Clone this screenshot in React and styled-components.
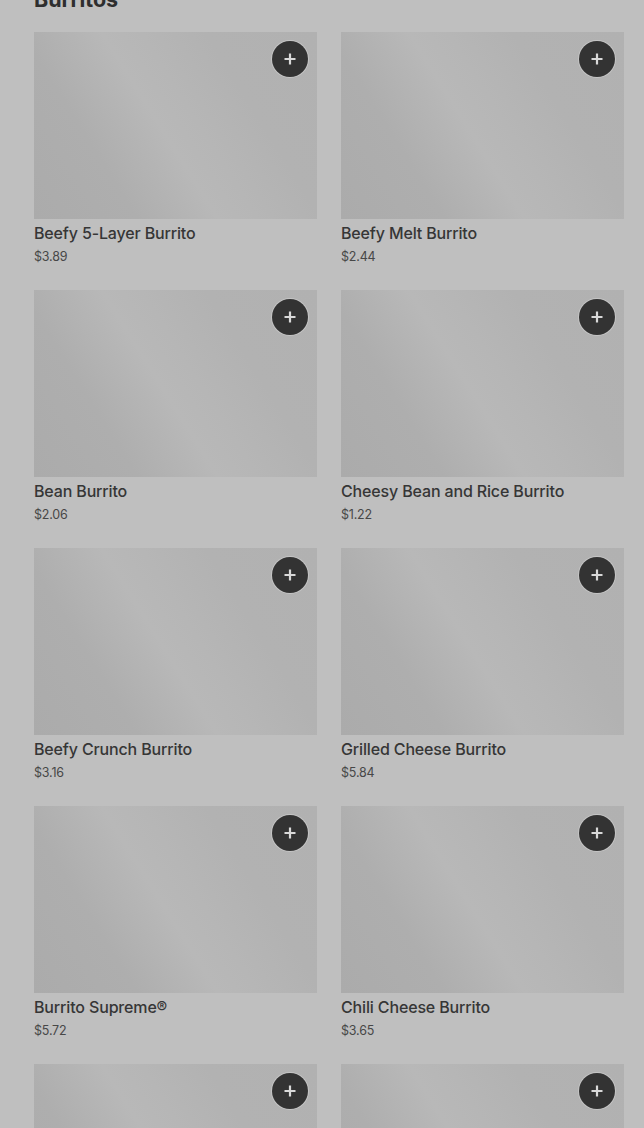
import React from "react";
import styled, { createGlobalStyle } from "styled-components";

const Global = createGlobalStyle`
  html, body { margin: 0; padding: 0; background: #bfbfbf; }
  body { font-family: Inter, "Noto Sans", "Liberation Sans", sans-serif; overflow: hidden; }
`;

const Page = styled.div`
  padding: 0 20px 0 34px;
  height: 1128px;
  overflow: hidden;
`;

const Heading = styled.h2`
  margin: -14px 0 20px;
  font-size: 21.5px;
  line-height: 26px;
  font-weight: 700;
  color: #2e2e2e;
`;

const Grid = styled.div`
  display: grid;
  grid-template-columns: 1fr 1fr;
  column-gap: 24px;
  row-gap: 24px;
`;

const Card = styled.div`
  display: flex;
  flex-direction: column;
`;

const Thumb = styled.div`
  position: relative;
  height: 187px;
  background: linear-gradient(
    58deg,
    #abababff 0%,
    #aeaeae 26%,
    #b8b8b8 46%,
    #b6b6b6 56%,
    #b2b2b2 72%,
    #b1b1b1 100%
  );
`;

const AddButton = styled.button`
  position: absolute;
  top: 9px;
  right: 9px;
  width: 36px;
  height: 36px;
  border-radius: 50%;
  border: none;
  padding: 0;
  background: #333333;
  box-shadow: 0 0 0 1px rgba(255, 255, 255, 0.25);
  display: flex;
  align-items: center;
  justify-content: center;
  cursor: pointer;
`;

const Name = styled.div`
  margin-top: 3px;
  font-size: 16px;
  line-height: 22px;
  font-weight: 500;
  letter-spacing: -0.15px;
  color: #363636;
`;

const Price = styled.div`
  margin-top: 4px;
  font-size: 12.5px;
  line-height: 18px;
  letter-spacing: -0.2px;
  color: #474747;
`;

const PlusIcon = () => (
  <svg width="14" height="14" viewBox="0 0 14 14">
    <path d="M7 1.5v11M1.5 7h11" stroke="#d9d9d9" strokeWidth="2.2" strokeLinecap="butt" />
  </svg>
);

const items = [
  ["Beefy 5-Layer Burrito", "$3.89"],
  ["Beefy Melt Burrito", "$2.44"],
  ["Bean Burrito", "$2.06"],
  ["Cheesy Bean and Rice Burrito", "$1.22"],
  ["Beefy Crunch Burrito", "$3.16"],
  ["Grilled Cheese Burrito", "$5.84"],
  ["Burrito Supreme®", "$5.72"],
  ["Chili Cheese Burrito", "$3.65"],
  ["Black Bean Burrito", "$1.99"],
  ["Shredded Chicken Burrito", "$2.49"],
];

export default function App() {
  return (
    <>
      <Global />
      <Page>
        <Heading>Burritos</Heading>
        <Grid>
          {items.map(([name, price]) => (
            <Card key={name}>
              <Thumb>
                <AddButton aria-label={`Add ${name}`}>
                  <PlusIcon />
                </AddButton>
              </Thumb>
              <Name>{name}</Name>
              <Price>{price}</Price>
            </Card>
          ))}
        </Grid>
      </Page>
    </>
  );
}
